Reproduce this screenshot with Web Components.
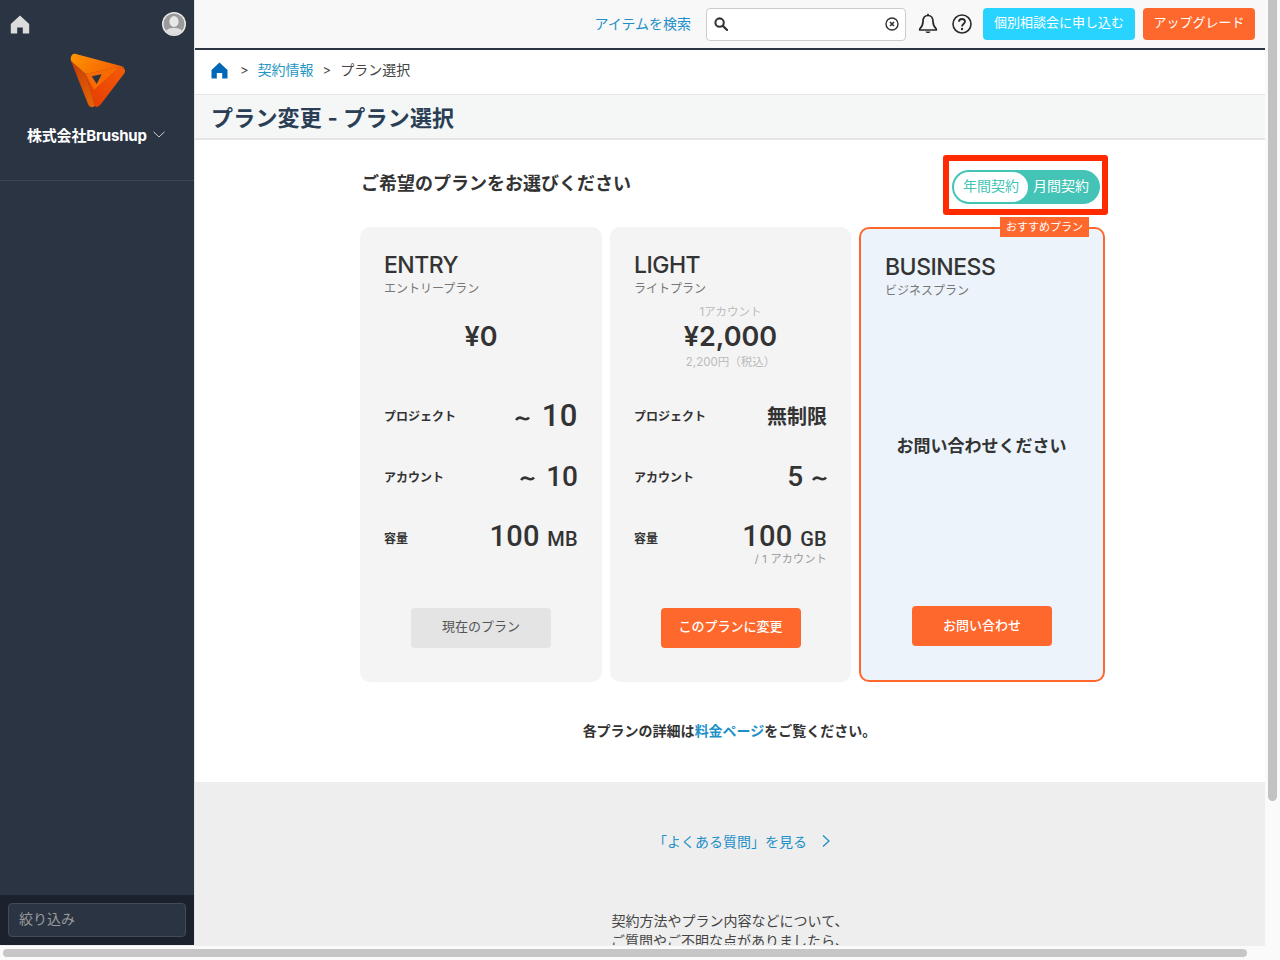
<!DOCTYPE html>
<html lang="ja">
<head>
<meta charset="utf-8">
<title>プラン変更</title>
<style>
  html, body { margin: 0; height: 100%; overflow: hidden; }
  body { font-family: Inter, "Noto Sans CJK JP", sans-serif; color: #333; background: #fff; }
</style>
</head>
<body>
<app-shell>
  <side-bar slot="side"></side-bar>
  <top-bar slot="top"></top-bar>
  <crumb-bar slot="top"></crumb-bar>
  <page-title slot="top">プラン変更 - プラン選択</page-title>

  <plan-section>
    <plan-toggle slot="toggle"></plan-toggle>

    <plan-card name="ENTRY" kana="エントリープラン">
      <plan-price slot="price" amount="¥0"></plan-price>
      <plan-row label="プロジェクト" big><tilde-mark lead></tilde-mark> 10</plan-row>
      <plan-row label="アカウント"><tilde-mark lead></tilde-mark> 10</plan-row>
      <plan-row label="容量" wide>100 <small>MB</small></plan-row>
      <plan-button slot="action" kind="muted">現在のプラン</plan-button>
    </plan-card>

    <plan-card name="LIGHT" kana="ライトプラン">
      <plan-price slot="price" amount="¥2,000" top="1アカウント" bottom="2,200円（税込）"></plan-price>
      <plan-row label="プロジェクト" cjk>無制限</plan-row>
      <plan-row label="アカウント">5 <tilde-mark></tilde-mark></plan-row>
      <plan-row label="容量" wide note="/ 1 アカウント">100 <small>GB</small></plan-row>
      <plan-button slot="action">このプランに変更</plan-button>
    </plan-card>

    <plan-card name="BUSINESS" kana="ビジネスプラン" featured badge="おすすめプラン">
      <p slot="message">お問い合わせください</p>
      <plan-button slot="action" kind="contact">お問い合わせ</plan-button>
    </plan-card>
  </plan-section>

  <faq-panel></faq-panel>
</app-shell>

<script>
"use strict";

////////////////////////////////////////////
// Helper
function define(tag, html, extra) {
  const template = document.createElement("template");
  template.innerHTML = html;
  class Component extends HTMLElement {
    constructor() {
      super();
      this.attachShadow({ mode: "open" }).appendChild(template.content.cloneNode(true));
      if (extra) extra(this, this.shadowRoot);
    }
  }
  customElements.define(tag, Component);
}

////////////////////////////////////////////
// Page frame, with the two fake browser scrollbars
define("app-shell", `
  <style>
    :host { display: grid; grid-template-columns: 1fr 15px; grid-template-rows: 945px 15px; height: 960px; width: 1280px; }
    .app { display: flex; overflow: hidden; min-width: 0; }
    .side { flex: 0 0 194px; display: flex; }
    .main { flex: 1; border-left: 1px solid #e3e3e3; overflow: hidden; min-width: 0; }
    .vbar { background: #fafafa; padding: 0 3px; box-sizing: border-box; }
    .vbar i { display: block; height: 801px; background: #c2c2c2; border-radius: 0 0 5px 5px; }
    .hbar { background: #fafafa; border-top: 1px solid #eee; padding: 3px 3px 0; box-sizing: border-box; }
    .hbar i { display: block; width: 1244px; height: 8px; background: #c6c6c6; border-radius: 4px; }
    .corner { background: #fafafa; }
  </style>
  <div class="app">
    <div class="side"><slot name="side"></slot></div>
    <div class="main"><slot name="top"></slot><slot></slot></div>
  </div>
  <div class="vbar"><i></i></div>
  <div class="hbar"><i></i></div>
  <div class="corner"></div>
`);

////////////////////////////////////////////
// Sidebar
define("side-bar", `
  <style>
    :host { display: flex; flex-direction: column; width: 194px; background: #2a3443; color: #fff; }
    .icons { display: flex; justify-content: space-between; align-items: center; height: 24px; padding: 12px 8px 0 10px; }
    .logo { display: block; margin: 12px 0 0 65px; }
    .brand { display: flex; align-items: center; gap: 6px; height: 24px; margin: 8px 0 0 27px; font-size: 15px; font-weight: 700; letter-spacing: -.2px; }
    hr { border: 0; border-top: 1px solid #3d4654; margin: 34px 0 0; }
    .fill { flex: 1; }
    .filter { height: 50px; background: #1c222d; padding: 8px; box-sizing: border-box; }
    .box { height: 34px; box-sizing: border-box; background: #2a3443; border: 1px solid #414b59; border-radius: 4px; padding: 0 10px; font-size: 14px; line-height: 30px; color: #9a9a9a; }
  </style>
  <div class="icons">
    <svg width="20" height="19" viewBox="0 0 20 19"><path d="M10 0.5 0.8 9v9.5h6.4v-6h5.6v6h6.4V9z" fill="#dcdcdc"/></svg>
    <svg width="24" height="24" viewBox="0 0 24 24">
      <defs><clipPath id="round"><circle cx="12" cy="12" r="10.5"/></clipPath></defs>
      <circle cx="12" cy="12" r="12" fill="#e8e8e8"/>
      <circle cx="12" cy="12" r="10.5" fill="#9a9a9a"/>
      <g clip-path="url(#round)" fill="#e8e8e8"><ellipse cx="12" cy="9.5" rx="4.6" ry="5.4"/><path d="M2 24c0-6 5-8 10-8s10 2 10 8z" fill="#e0e0e0"/></g>
    </svg>
  </div>
  <svg class="logo" width="66" height="66" viewBox="0 0 66 66">
    <defs>
      <linearGradient id="top" x1="0" y1="0" x2="1" y2=".3"><stop offset="0" stop-color="#ff9400"/><stop offset="1" stop-color="#f56204"/></linearGradient>
      <linearGradient id="left" x1="0" y1="0" x2=".6" y2="1"><stop offset="0" stop-color="#c53a06"/><stop offset="1" stop-color="#e46103"/></linearGradient>
      <linearGradient id="right" x1="1" y1="0" x2="0" y2="1"><stop offset="0" stop-color="#f45c06"/><stop offset="1" stop-color="#e63a02"/></linearGradient>
    </defs>
    <path d="M20.7 26 54 19l5.500 2c1 2.500.5 3.500-.5 4.800L36 56c-3 3.500-5 3.500-6 2z" fill="url(#right)"/>
    <path d="M20.7 26 54 19 29 41.700z" fill="#f76a04"/>
    <path d="M6 13 23 56c1.500 3.500 5 4 7 2L20.700 26z" fill="url(#left)"/>
    <path d="M6 13C5 8 7.500 5.200 11 6L56 18c2 .6 3 1.500 3.500 3L54 19 20.700 26z" fill="url(#top)"/>
    <path d="M26.700 28.300 36.700 26.200 31.700 36z" fill="#2a3443"/>
  </svg>
  <div class="brand">株式会社Brushup
    <svg width="12" height="7" viewBox="0 0 12 7"><path d="M.5 .8 6 6 11.500 .8" fill="none" stroke="#c8ccd2" stroke-width="1"/></svg>
  </div>
  <hr>
  <div class="fill"></div>
  <div class="filter"><div class="box">絞り込み</div></div>
`);

////////////////////////////////////////////
// Top bar
define("top-bar", `
  <style>
    :host { display: flex; align-items: center; height: 48px; background: #f8f8f8; border-bottom: 2px solid #2a3443; padding-right: 10px; justify-content: flex-end; font-size: 13px; }
    a { color: #1e90c8; font-size: 14px; margin: 0 15px 2px 0; }
    .search { width: 200px; height: 33px; box-sizing: border-box; background: #fff; border: 1px solid #ccc; border-radius: 4px; display: flex; justify-content: space-between; align-items: center; padding: 0 6px 0 7px; margin-right: 12px; }
    .bell { margin-right: 14px; }
    .help { margin-right: 11px; }
    .btn { height: 32px; line-height: 29px; border-radius: 4px; color: #fff; text-align: center; }
    .cyan { width: 152px; background: #29d3ff; margin-right: 8px; }
    .orange { width: 112px; background: #ff682c; }
  </style>
  <a>アイテムを検索</a>
  <div class="search">
    <svg width="14" height="14" viewBox="0 0 15 15"><circle cx="6" cy="6" r="4.500" fill="none" stroke="#333" stroke-width="2.200"/><path d="M9.500 9.500 14 14" stroke="#333" stroke-width="2.400" stroke-linecap="round"/></svg>
    <svg width="14" height="14" viewBox="0 0 14 14"><circle cx="7" cy="7" r="6" fill="none" stroke="#333" stroke-width="1.400"/><path d="M5 5 9 9M9 5 5 9" stroke="#333" stroke-width="1.600"/></svg>
  </div>
  <svg class="bell" width="20" height="22" viewBox="0 0 20 22"><path d="M10 2.500c-3.400 0-5 2.800-5 6 0 4-1.300 5.500-3.300 7.500v1h16.600v-1c-2-2-3.300-3.500-3.300-7.500 0-3.200-1.600-6-5-6z" fill="none" stroke="#2a2a2a" stroke-width="1.700" stroke-linejoin="round"/><path d="M7.500 18.500c.5 2 4.500 2 5 0z" fill="#2a2a2a"/><path d="M10 .8v1.700" stroke="#2a2a2a" stroke-width="1.700"/></svg>
  <svg class="help" width="20" height="20" viewBox="0 0 20 20"><circle cx="10" cy="10" r="9" fill="none" stroke="#2a2a2a" stroke-width="1.600"/><path d="M7 7.800C7 5.800 8.500 5 10 5s3 .9 3 2.600c0 2.400-3 2.400-3 4.900" fill="none" stroke="#2a2a2a" stroke-width="1.800"/><circle cx="10" cy="15" r="1.200" fill="#2a2a2a"/></svg>
  <div class="btn cyan">個別相談会に申し込む</div>
  <div class="btn orange">アップグレード</div>
`);

////////////////////////////////////////////
// Breadcrumb and page title
define("crumb-bar", `
  <style>
    :host { display: flex; align-items: center; height: 45px; box-sizing: border-box; padding: 0 0 4px 16px; border-bottom: 1px solid #e5e5e5; font-size: 14px; color: #444; background: #fff; }
    svg { margin-right: 12px; }
    a { color: #2596c4; margin-bottom: 2px; }
    span { margin: 0 9px 0 0; font-size: 13px; }
    .second { margin-left: 9px; }
    b { font-weight: 400; margin-bottom: 2px; }
  </style>
  <svg width="17" height="17" viewBox="0 0 17 17"><path d="M8.500 .5 .5 8v8.500h5.300V11h5.400v5.500h5.300V8z" fill="#0068b7"/></svg>
  <span>&gt;</span><a>契約情報</a><span class="second">&gt;</span><b>プラン選択</b>
`);

define("page-title", `
  <style>
    :host { display: block; height: 43px; line-height: 46px; padding-left: 16px; background: #f5f7f7; border-bottom: 2px solid #e5e5e5; font-size: 22px; font-weight: 700; color: #2a3f55; letter-spacing: .2px; }
  </style>
  <slot></slot>
`);

////////////////////////////////////////////
// Plan selection
define("plan-section", `
  <style>
    :host { display: block; height: 642px; box-sizing: border-box; padding: 15px 0 0 165px; background: #fff; }
    .head { position: relative; display: flex; justify-content: space-between; width: 745px; height: 72px; }
    h2 { margin: 15px 0 0 1px; font-size: 18px; line-height: 28px; font-weight: 700; color: #333; }
    .cards { display: grid; grid-template-columns: 242px 241px 246px; gap: 8px; width: 745px; height: 455px; }
    p { width: 745px; margin: 38px 0 0; font-size: 14px; line-height: 22px; font-weight: 700; text-align: center; transform: translateX(-3px); }
    a { color: #1e90c8; }
  </style>
  <div class="head">
    <h2>ご希望のプランをお選びください</h2>
    <slot name="toggle"></slot>
  </div>
  <div class="cards"><slot></slot></div>
  <p>各プランの詳細は<a>料金ページ</a>をご覧ください。</p>
`);

define("plan-toggle", `
  <style>
    :host { display: block; position: relative; width: 148px; height: 34px; margin: 15px 5px 0 0; }
    .pill { display: flex; height: 34px; box-sizing: border-box; border-radius: 17px; background: #43c4b6; font-size: 14px; color: #fff; align-items: center; }
    .on { width: 74px; height: 30px; margin-left: 2px; line-height: 28px; box-sizing: border-box; text-align: center; background: #fff; color: #43c4b6; border-radius: 15px; flex: none; }
    .off { flex: 1; text-align: center; padding: 0 6px 4px 0; }
    /* red annotation around the toggle */
    .mark { position: absolute; left: -9px; top: -15px; width: 165px; height: 60px; box-sizing: border-box; border: 6px solid #ff2a00; border-radius: 3px; }
  </style>
  <div class="pill"><div class="on">年間契約</div><div class="off">月間契約</div></div>
  <div class="mark"></div>
`);

define("plan-card", `
  <style>
    :host { display: flex; flex-direction: column; position: relative; box-sizing: border-box; height: 455px; padding: 24px 24px 0; background: #f4f4f4; border-radius: 10px; }
    :host([featured]) { background: #ecf3fa; border: 2px solid #ff682c; padding: 24px 24px 0; }
    h3 { margin: 0; font-size: 23px; line-height: 28px; font-weight: 500; color: #333; letter-spacing: -.5px; }
    .kana { font-size: 12px; line-height: 18px; color: #777; margin-top: 1px; }
    .price { height: 87px; }
    .rows { height: 223px; }
    .action { display: flex; justify-content: center; }
    .badge { position: absolute; top: -12px; right: 14px; height: 20px; line-height: 20px; padding: 0 6px; background: #ff682c; color: #fff; font-size: 11px; }
    :host([featured]) .price, :host([featured]) .rows { display: none; }
    :host([featured]) .body { height: 306px; }
    ::slotted(p) { margin: 134px 0 0 -1px; font-size: 17px; line-height: 24px; font-weight: 700; text-align: center; color: #333; }
  </style>
  <h3></h3>
  <div class="kana"></div>
  <div class="price"><slot name="price"></slot></div>
  <div class="rows"><slot></slot></div>
  <div class="body"><slot name="message"></slot></div>
  <div class="action"><slot name="action"></slot></div>
`, (el, root) => {
  root.querySelector("h3").textContent = el.getAttribute("name");
  root.querySelector(".kana").textContent = el.getAttribute("kana");
  const badge = el.getAttribute("badge");
  if (badge) {
    const tag = document.createElement("div");
    tag.className = "badge";
    tag.textContent = badge;
    root.appendChild(tag);
  } else {
    root.querySelector(".body").remove();
  }
});

define("plan-price", `
  <style>
    :host { display: block; text-align: center; color: #bbb; font-size: 11.500px; }
    .top { height: 16px; line-height: 16px; margin-top: 6px; }
    .amount { font-size: 27px; line-height: 32px; font-weight: 600; color: #333; margin-top: 1px; }
    .bottom { line-height: 18px; }
  </style>
  <div class="top"></div>
  <div class="amount"></div>
  <div class="bottom"></div>
`, (el, root) => {
  root.querySelector(".top").textContent = el.getAttribute("top") || "";
  root.querySelector(".amount").textContent = el.getAttribute("amount");
  root.querySelector(".bottom").textContent = el.getAttribute("bottom") || "";
});

define("plan-row", `
  <style>
    :host { display: grid; grid-template-columns: auto 1fr; align-items: center; height: 61px; position: relative; }
    .label { font-size: 12px; font-weight: 700; color: #333; }
    .value { text-align: right; font-family: Roboto, "Noto Sans CJK JP", sans-serif; font-size: 28px; font-weight: 500; color: #333; line-height: 36px; white-space: nowrap; }
    :host([big]) .value { font-size: 31px; letter-spacing: .5px; }
    :host([wide]) .value { font-size: 29px; letter-spacing: .3px; }
    :host([cjk]) .value { font-family: "Noto Sans CJK JP", sans-serif; font-size: 20px; font-weight: 700; }
    ::slotted(small) { font-size: 20px; font-weight: 500; }
    .note { position: absolute; right: 0; top: 43px; font-size: 11px; color: #999; letter-spacing: .3px; }
  </style>
  <div class="label"></div>
  <div class="value"><slot></slot></div>
  <div class="note"></div>
`, (el, root) => {
  root.querySelector(".label").textContent = el.getAttribute("label");
  root.querySelector(".note").textContent = el.getAttribute("note") || "";
});

define("tilde-mark", `
  <style>
    :host { display: inline-block; width: 15px; margin-left: 2px; vertical-align: 4px; }
    :host([lead]) { margin: 0 4px 0 0; }
    svg { display: block; }
  </style>
  <svg width="15" height="7" viewBox="0 0 15 7"><path d="M1 5c2-3 4-3 6.500-1.700S12 5 14 2.500" fill="none" stroke="#333" stroke-width="2.600"/></svg>
`);

define("plan-button", `
  <style>
    :host { display: block; width: 140px; height: 40px; line-height: 37px; text-align: center; border-radius: 4px; background: #ff682c; color: #fff; font-size: 13px; font-weight: 500; }
    :host([kind="muted"]) { background: #e4e4e4; color: #555; font-weight: 400; }
    :host([kind="contact"]) { line-height: 38px; }
  </style>
  <slot></slot>
`);

////////////////////////////////////////////
// FAQ strip at the bottom
define("faq-panel", `
  <style>
    :host { display: block; background: #eee; height: 170px; padding: 48px 0 0 0; box-sizing: border-box; text-align: center; font-size: 14px; color: #444; overflow: hidden; }
    .link { display: flex; justify-content: center; align-items: center; gap: 14px; height: 22px; color: #1e90c8; transform: translateX(12px); }
    p { margin: 59px 0 0; line-height: 20px; }
  </style>
  <div class="link">「よくある質問」を見る
    <svg width="10" height="14" viewBox="0 0 10 14"><path d="M2 1.500 8 7 2 12.500" fill="none" stroke="#1e90c8" stroke-width="1.300"/></svg>
  </div>
  <p>契約方法やプラン内容などについて、<br>ご質問やご不明な点がありましたら、</p>
`);
</script>
</body>
</html>
